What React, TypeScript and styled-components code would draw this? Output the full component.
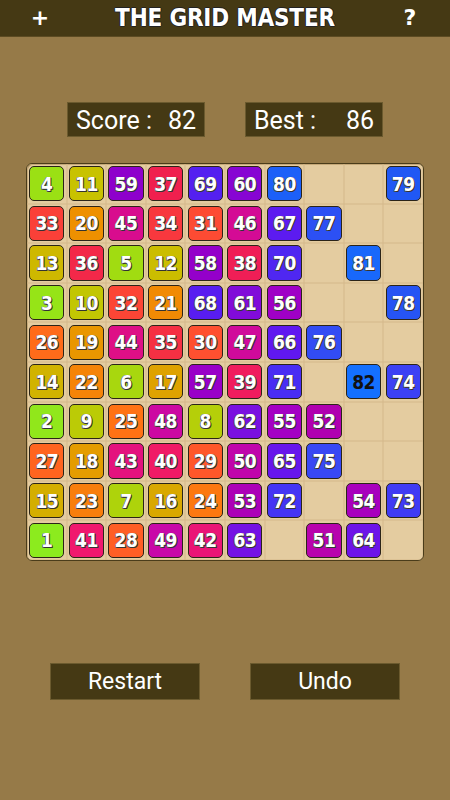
import React from "react";
import styled, { createGlobalStyle } from "styled-components";

const GlobalStyle = createGlobalStyle`
  html, body {
    margin: 0;
    padding: 0;
    background: #967a48;
  }
  body {
    font-family: Roboto, "Liberation Sans", sans-serif;
  }
`;

// board layout, row by row; 0 means an empty cell
const board: number[][] = [
  [4, 11, 59, 37, 69, 60, 80, 0, 0, 79],
  [33, 20, 45, 34, 31, 46, 67, 77, 0, 0],
  [13, 36, 5, 12, 58, 38, 70, 0, 81, 0],
  [3, 10, 32, 21, 68, 61, 56, 0, 0, 78],
  [26, 19, 44, 35, 30, 47, 66, 76, 0, 0],
  [14, 22, 6, 17, 57, 39, 71, 0, 82, 74],
  [2, 9, 25, 48, 8, 62, 55, 52, 0, 0],
  [27, 18, 43, 40, 29, 50, 65, 75, 0, 0],
  [15, 23, 7, 16, 24, 53, 72, 0, 54, 73],
  [1, 41, 28, 49, 42, 63, 0, 51, 64, 0],
];

const LAST = 82;

const stops: [number, string][] = [
  [1, "#8ceb1e"],
  [4, "#9be014"],
  [11, "#c8c200"],
  [15, "#d4ae00"],
  [20, "#ee9000"],
  [25, "#ff7214"],
  [30, "#ff5030"],
  [33, "#fa4038"],
  [37, "#f0204e"],
  [41, "#f0186e"],
  [45, "#d80c8e"],
  [49, "#c808a8"],
  [52, "#b000b0"],
  [55, "#a400c4"],
  [59, "#8e00cc"],
  [62, "#7a10e0"],
  [66, "#6018f0"],
  [69, "#5420f0"],
  [72, "#4434f4"],
  [75, "#3848f4"],
  [79, "#2058f4"],
  [82, "#1470ff"],
];

const hex = (c: string) => [1, 3, 5].map((i) => parseInt(c.slice(i, i + 2), 16));

const tileColor = (n: number) => {
  for (let i = 0; i < stops.length - 1; i++) {
    const [a, ca] = stops[i];
    const [b, cb] = stops[i + 1];
    if (n >= a && n <= b) {
      const t = (n - a) / (b - a);
      const x = hex(ca);
      const y = hex(cb);
      const rgb = x.map((v, k) => Math.round(v + (y[k] - v) * t));
      return `rgb(${rgb.join(",")})`;
    }
  }
  return stops[stops.length - 1][1];
};

const Page = styled.div`
  width: 450px;
  height: 800px;
  display: flex;
  flex-direction: column;
  align-items: center;
  background: #967a48;
`;

const Header = styled.header`
  width: 100%;
  height: 37px;
  box-sizing: border-box;
  background: #453914;
  border-bottom: 1px solid #5c4b22;
  display: flex;
  align-items: center;
  justify-content: space-between;
  padding: 0 30px 0 30px;
`;

const HeaderIcon = styled.span`
  width: 20px;
  text-align: center;
  color: #fff;
  font-family: "DejaVu Sans", sans-serif;
  font-weight: 700;
  font-size: 22px;
  line-height: 1;
`;

const Title = styled.h1`
  margin: 0;
  color: #fff;
  font-family: "DejaVu Sans Condensed", "DejaVu Sans", sans-serif;
  font-weight: 700;
  font-size: 24px;
  letter-spacing: -0.2px;
  text-transform: uppercase;
  text-shadow: 0 1px 0 #222, 1px 0 0 #222, -1px 0 0 #222, 0 -1px 0 #222;
`;

const ScoreRow = styled.div`
  display: flex;
  gap: 40px;
  margin-top: 65px;
`;

const ScoreBox = styled.div`
  width: 138px;
  height: 35px;
  box-sizing: border-box;
  background: #453914;
  border: 1px solid #6b5a2e;
  display: flex;
  align-items: center;
  justify-content: space-between;
  padding: 1px 8px 0 8px;
  color: #fff;
  font-size: 25px;
`;

const Board = styled.div`
  margin-top: 26px;
  width: 398px;
  height: 398px;
  box-sizing: border-box;
  border: 1px solid #4a3c1a;
  border-radius: 6px;
  background: #e4cca0;
  box-shadow: inset 1px 1px 0 #b89a68;
  display: grid;
  grid-template-columns: repeat(10, 1fr);
  grid-template-rows: repeat(10, 1fr);
  overflow: hidden;
`;

const Cell = styled.div`
  box-shadow: inset 0 0 0 0.5px #d4b88a;
  padding: 2.3px;
  display: flex;
`;

const Tile = styled.div<{ $bg: string; $last: boolean }>`
  flex: 1;
  border: 1px solid #2b2418;
  border-radius: 5px;
  background: ${(p) => p.$bg};
  display: flex;
  align-items: center;
  justify-content: center;
  font-family: "DejaVu Sans Condensed", "DejaVu Sans", sans-serif;
  font-weight: 700;
  font-size: 19px;
  letter-spacing: -0.5px;
  color: ${(p) => (p.$last ? "#111" : "#fff")};
  text-shadow: ${(p) =>
    p.$last
      ? "none"
      : "1px 1px 0 #333, -0.5px -0.5px 0 #555, 0.5px -0.5px 0 #555, -0.5px 0.5px 0 #555"};
`;

const ButtonRow = styled.div`
  display: flex;
  gap: 50px;
  margin-top: 102px;
`;

const Button = styled.button`
  width: 150px;
  height: 37px;
  background: #453914;
  border: 1px solid #6b5a2e;
  color: #fff;
  font-family: Roboto, "Liberation Sans", sans-serif;
  font-size: 23px;
  padding: 0;
  cursor: pointer;
`;

export default function App() {
  return (
    <>
      <GlobalStyle />
      <Page>
        <Header>
          <HeaderIcon>+</HeaderIcon>
          <Title>The Grid Master</Title>
          <HeaderIcon>?</HeaderIcon>
        </Header>
        <ScoreRow>
          <ScoreBox>
            <span>Score :</span>
            <span>82</span>
          </ScoreBox>
          <ScoreBox>
            <span>Best :</span>
            <span>86</span>
          </ScoreBox>
        </ScoreRow>
        <Board>
          {board.flat().map((n, i) => (
            <Cell key={i}>
              {n > 0 && (
                <Tile $bg={tileColor(n)} $last={n === LAST}>
                  {n}
                </Tile>
              )}
            </Cell>
          ))}
        </Board>
        <ButtonRow>
          <Button>Restart</Button>
          <Button>Undo</Button>
        </ButtonRow>
      </Page>
    </>
  );
}
